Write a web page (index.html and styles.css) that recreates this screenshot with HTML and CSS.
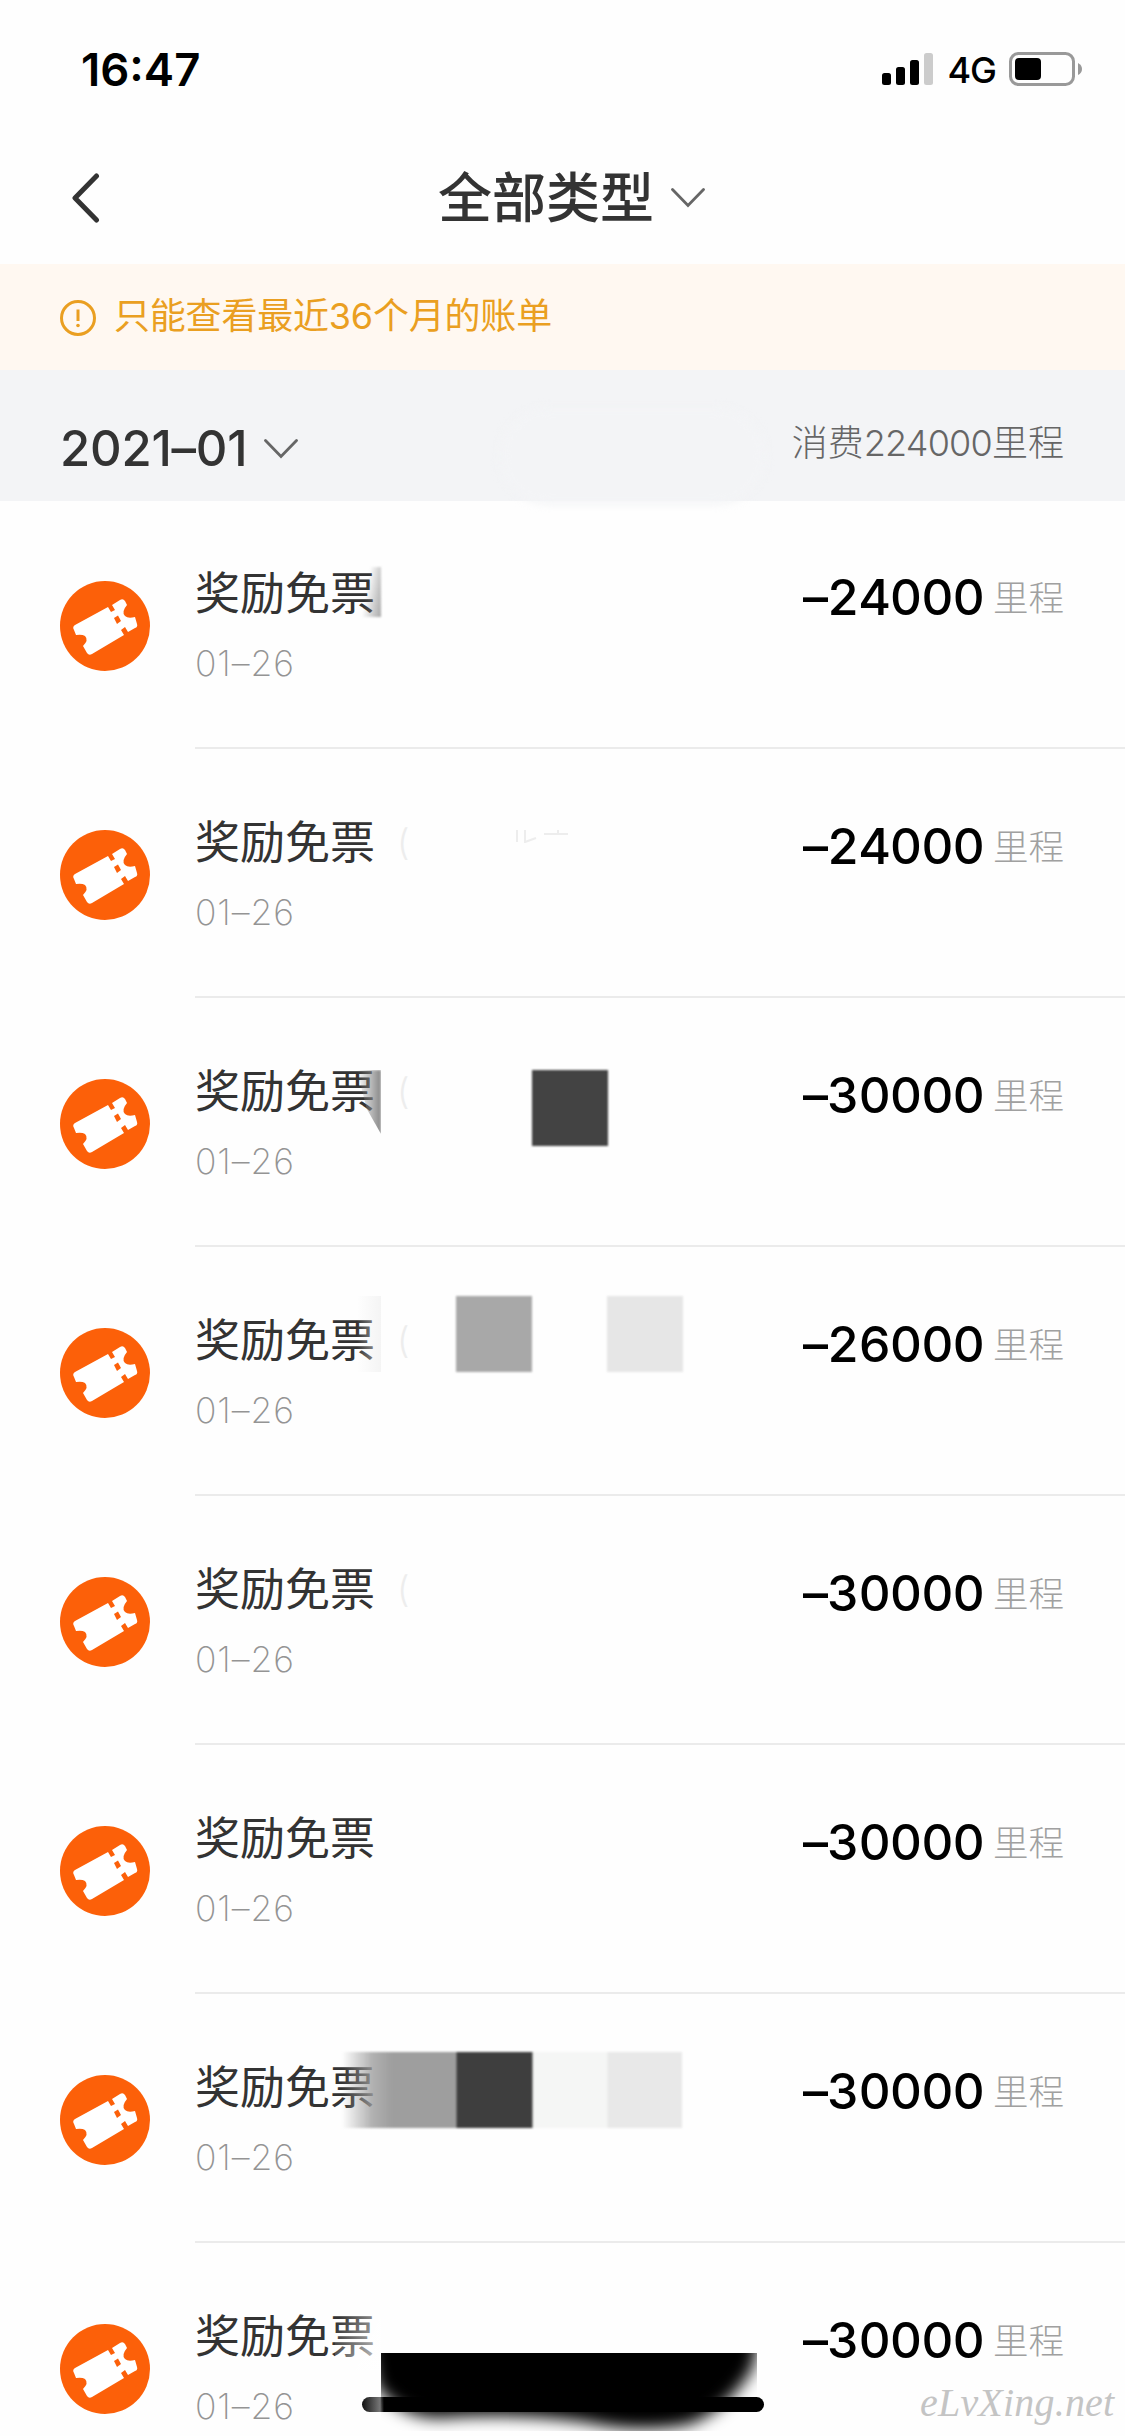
FILE: index.html
```html
<!DOCTYPE html>
<html lang="zh-CN">
<head>
<meta charset="utf-8">
<title>全部类型</title>
<link rel="stylesheet" href="styles.css">
</head>
<body>
<svg width="0" height="0" class="defs" aria-hidden="true">
  <symbol id="ticket" viewBox="0 0 90 90">
    <circle cx="45" cy="45" r="45" fill="#fc6009"/>
    <path d="M14 49Q12 46 15 44L48 26L51 31L55 29L52 24L60 19Q63 17 65 20L67 24Q61 31 65 35Q68 38 75 36L77 43Q78 46 75 47L68 51L65 46L61 49L64 54L32 73Q29 75 27 72L23 65Q29 59 25 55Q22 53 16 54Z" fill="#fff"/>
    <path d="M54 37L58 34.500L61 40L57 43Z" fill="#fc6009"/>
  </symbol>
  <symbol id="chevron" viewBox="0 0 34 20">
    <path d="M1.500 1.500L17 17.500L32.500 1.500" fill="none" stroke="#666" stroke-width="2.800" stroke-linecap="round"/>
  </symbol>
</svg>
<div class="screen">
  <div class="status">
    <span class="time">16:47</span>
    <div class="indicators">
      <svg class="signal" width="51" height="32" viewBox="0 0 51 32"><rect y="20" width="9" height="12" rx="2.500"/><rect x="14" y="14" width="9" height="18" rx="2.500"/><rect x="28" y="7" width="9" height="25" rx="2.500"/><rect x="42" width="9" height="32" rx="2.500" fill="#ccc"/></svg>
      <span class="network">4G</span>
      <svg width="74" height="34" viewBox="0 0 74 34"><rect x="1.500" y="1.500" width="63" height="31" rx="8" fill="none" stroke="#999" stroke-width="3"/><rect x="6" y="6" width="26" height="22" rx="4"/><path d="M69 11Q73 13 73 17T69 23Z" fill="#999"/></svg>
    </div>
  </div>
  <header class="nav">
    <svg class="back" width="28" height="50" viewBox="0 0 28 50"><path d="M24.500 3L3 25L24.500 47" fill="none" stroke="#333" stroke-width="5" stroke-linecap="round" stroke-linejoin="round"/></svg>
    <h1>全部类型</h1>
    <svg class="chevron" width="34" height="20"><use href="#chevron"/></svg>
  </header>
  <div class="notice">
    <svg width="36" height="36" viewBox="0 0 36 36"><circle cx="18" cy="18" r="16.500" fill="none" stroke="#ea9f21" stroke-width="3"/><path d="M18 9.500V21" stroke="#ea9f21" stroke-width="3"/><circle cx="18" cy="25.500" r="1.800" fill="#ea9f21"/></svg>
    <span>只能查看最近36个月的账单</span>
  </div>
  <div class="month">
    <span class="month-name">2021–01</span>
    <svg class="chevron" width="34" height="20"><use href="#chevron"/></svg>
    <span class="total">消费<span class="num">224000</span>里程</span>
    <i class="smear"></i>
  </div>
  <ul class="list">
    <li class="row"><svg class="icon"><use href="#ticket"/></svg><div class="body"><div class="info"><span class="name">奖励免票</span><time>01–26</time></div><div class="amount"><b>–24000</b><span>里程</span></div></div><i class="edge first"></i></li>
    <li class="row"><svg class="icon"><use href="#ticket"/></svg><div class="body"><div class="info"><span class="name">奖励免票</span><time>01–26</time></div><div class="amount"><b>–24000</b><span>里程</span></div></div><i class="paren">(</i><svg class="trace" width="64" height="24" viewBox="0 0 64 24"><path d="M9 1V13M17 1V14M17 13L28 9M36 5H60M50 1V5" fill="none" stroke="#ededed" stroke-width="2"/></svg></li>
    <li class="row"><svg class="icon"><use href="#ticket"/></svg><div class="body"><div class="info"><span class="name">奖励免票</span><time>01–26</time></div><div class="amount"><b>–30000</b><span>里程</span></div></div><i class="edge wedge"></i><i class="paren">(</i><i class="block third"></i></li>
    <li class="row"><svg class="icon"><use href="#ticket"/></svg><div class="body"><div class="info"><span class="name">奖励免票</span><time>01–26</time></div><div class="amount"><b>–26000</b><span>里程</span></div></div><i class="edge pale"></i><i class="paren">(</i><i class="block grey"></i><i class="block light"></i></li>
    <li class="row"><svg class="icon"><use href="#ticket"/></svg><div class="body"><div class="info"><span class="name">奖励免票</span><time>01–26</time></div><div class="amount"><b>–30000</b><span>里程</span></div></div><i class="paren">(</i></li>
    <li class="row"><svg class="icon"><use href="#ticket"/></svg><div class="body"><div class="info"><span class="name">奖励免票</span><time>01–26</time></div><div class="amount"><b>–30000</b><span>里程</span></div></div></li>
    <li class="row"><svg class="icon"><use href="#ticket"/></svg><div class="body"><div class="info"><span class="name">奖励免票</span><time>01–26</time></div><div class="amount"><b>–30000</b><span>里程</span></div></div><i class="strip"></i></li>
    <li class="row"><svg class="icon"><use href="#ticket"/></svg><div class="body"><div class="info"><span class="name">奖励免票</span><time>01–26</time></div><div class="amount"><b>–30000</b><span>里程</span></div></div><i class="veil"></i></li>
  </ul>
  <div class="home"></div>
  <svg class="brush" width="420" height="90" viewBox="0 0 420 90">
    <defs><filter id="soft" x="-20%" y="-40%" width="140%" height="180%"><feGaussianBlur stdDeviation="8"/></filter><clipPath id="cut"><rect x="21" y="7" width="376" height="78"/></clipPath></defs>
    <g clip-path="url(#cut)"><path d="M5-20H402L393 22Q370 62 330 78Q280 88 225 76Q150 66 80 72Q40 72 16 40Z" filter="url(#soft)"/></g>
  </svg>
  <span class="mark">eLvXing.net</span>
</div>
</body>
</html>
```
FILE: styles.css
```css
* { box-sizing: border-box; }
body { margin: 0; background: #fff; }
.defs { position: absolute; }
.screen {
  position: relative;
  width: 1125px;
  height: 2436px;
  overflow: hidden;
  background: #fefefe;
  color: #333;
  font-family: Inter, "Noto Sans CJK SC", sans-serif;
}
svg { display: block; flex: none; }
.status {
  display: flex;
  justify-content: space-between;
  align-items: center;
  height: 138px;
  padding: 0 42px 0 81px;
  color: #000;
}
.time { font-size: 45.5px; font-weight: 600; }
.indicators { display: flex; align-items: center; }
.network { margin: 2px 13px 0 14px; font-size: 36px; font-weight: 500; letter-spacing: -1px; }
.nav {
  display: flex;
  align-items: center;
  height: 126px;
  padding: 0 0 6px 72px;
}
.nav h1 {
  margin: 2px 17px 0 338px;
  font-size: 54px;
  line-height: 80px;
  font-weight: 500;
}
.notice {
  display: flex;
  align-items: center;
  gap: 18px;
  height: 106px;
  padding: 2px 60px 0;
  background: #fff8f1;
  color: #ea9f21;
  font-size: 36px;
}
.notice span { line-height: 50px; margin-top: -4px; letter-spacing: -.2px; }
.month {
  position: relative;
  display: flex;
  align-items: center;
  height: 131px;
  padding: 26px 61px 0 60px;
  background: #f3f4f6;
}
.month-name {
  width: 187px;
  margin-right: 17px;
  font-size: 49px;
  font-weight: 500;
  letter-spacing: -.2px;
  white-space: nowrap;
}
.month .chevron { margin-top: 1px; }
.total {
  margin: -18px 0 0 auto;
  color: #666;
  font-size: 36px;
  font-weight: 300;
}
.num { letter-spacing: -.8px; }
.smear {
  position: absolute;
  left: 500px;
  top: 38px;
  width: 265px;
  height: 96px;
  border-radius: 50px;
  background: #f3f4f6;
  filter: blur(5px);
}
.list { margin: 0; padding: 0; list-style: none; }
.row {
  position: relative;
  display: flex;
  height: 249px;
  padding: 0 0 1px 60px;
}
.icon { width: 90px; height: 90px; margin: 80px 45px 0 0; }
.body {
  flex: 1;
  display: flex;
  justify-content: space-between;
  padding: 60px 61px 0 0;
  border-bottom: 2px solid #ebebeb;
}
.info { display: flex; flex-direction: column; }
.name { margin-top: 1px; font-size: 45px; line-height: 64px; }
time {
  margin-top: 14px;
  color: #949494;
  font-size: 35.5px;
  line-height: 48px;
  font-weight: 200;
  letter-spacing: .9px;
}
.amount { display: flex; align-items: baseline; gap: 9px; height: 70px; }
.amount b {
  color: #000;
  font-size: 50px;
  line-height: 72px;
  font-weight: 500;
  font-feature-settings: "tnum";
  letter-spacing: -1px;
}
.amount span { position: relative; top: -4px; color: #a0a0a0; font-size: 35.5px; font-weight: 300; }
.edge { position: absolute; width: 24px; left: 357px; }
.first { top: 66px; height: 50px; background: linear-gradient(100deg, transparent 40%, #888b); filter: blur(1px); }
.wedge {
  top: 71px;
  height: 64px;
  background: linear-gradient(90deg, transparent, #888);
  clip-path: polygon(0 0, 100% 0, 100% 100%, 40% 60%);
  filter: blur(1px);
}
.pale { top: 48px; height: 76px; background: linear-gradient(90deg, transparent, #eee9); }
.paren { position: absolute; left: 397px; top: 67px; color: #ededed; font: 300 36px/50px Inter, sans-serif; }
.trace { position: absolute; left: 508px; top: 79px; }
.block { position: absolute; width: 76px; height: 76px; filter: blur(1px); }
.third { left: 532px; top: 71px; background: #434343; }
.grey { left: 456px; top: 48px; background: #a8a8a8; }
.light { left: 607px; top: 48px; background: #e6e6e6; }
.strip {
  position: absolute;
  left: 342px;
  top: 57px;
  width: 340px;
  height: 76px;
  background: linear-gradient(90deg, #9e9e9e00, #9e9e9ecc 30px, #9e9e9e 50px 114px, #3e3e3e 115px 190px, #f5f6f5 191px 265px, #e8e8e8 266px);
  filter: blur(1px);
}
.veil { position: absolute; left: 335px; top: 66px; width: 46px; height: 60px; background: linear-gradient(115deg, #fff0 10%, #fffc); }
.home {
  position: absolute;
  left: 362px;
  top: 2397px;
  width: 402px;
  height: 15px;
  border-radius: 8px;
  background: linear-gradient(90deg, #111, #777 18px, #000 22px);
}
.brush { position: absolute; left: 360px; top: 2346px; }
.mark {
  position: absolute;
  left: 920px;
  top: 2378px;
  color: #c4c4c4;
  font: italic 40px/50px "Liberation Serif", serif;
  letter-spacing: .2px;
}
```
